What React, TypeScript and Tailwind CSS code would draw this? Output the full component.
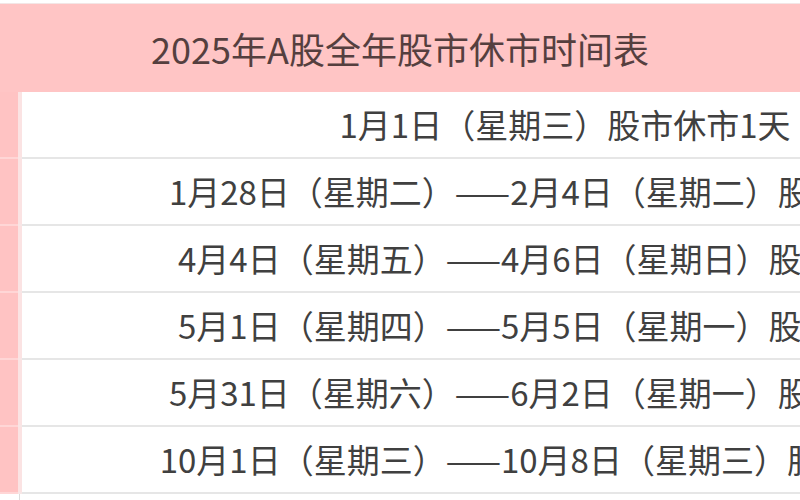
import React from "react";

const rows = [
  "1月1日（星期三）股市休市1天",
  "1月28日（星期二）——2月4日（星期二）股市休市8天",
  "4月4日（星期五）——4月6日（星期日）股市休市3天",
  "5月1日（星期四）——5月5日（星期一）股市休市5天",
  "5月31日（星期六）——6月2日（星期一）股市休市3天",
  "10月1日（星期三）——10月8日（星期三）股市休市8天",
];

const App: React.FC = () => {
  return (
    <div
      className="w-[800px] h-[500px] overflow-hidden bg-white pt-[3px]"
      style={{ fontFamily: '"Noto Sans CJK SC", "Noto Sans", sans-serif' }}
    >
      <div className="h-[89px] bg-[#ffc5c5] flex items-center justify-center text-[36px] text-[#553f3f] border-t border-[#f3e6e6]">
        2025年A股全年股市休市时间表
      </div>

      <div className="flex flex-col">
        {rows.map((text) => (
          <div key={text} className="flex h-[67px]">
            <div className="w-[18px] shrink-0 bg-[#ffc3c3] border-b-2 border-[#ffd6d6]" />
            <div className="w-[4px] shrink-0 bg-[#fbe3e3] border-b-2 border-[#f7e6e6]" />
            <div className="w-[1086px] shrink-0 flex items-center justify-center whitespace-nowrap text-[33px] text-[#404040] border-b-2 border-[#e6e6e6]">
              {text}
            </div>
          </div>
        ))}
        <div className="flex h-[20px]">
          <div className="w-[20px] shrink-0 border-r border-[#dcdcdc]" />
          <div className="flex-1" />
        </div>
      </div>
    </div>
  );
};

export default App;
